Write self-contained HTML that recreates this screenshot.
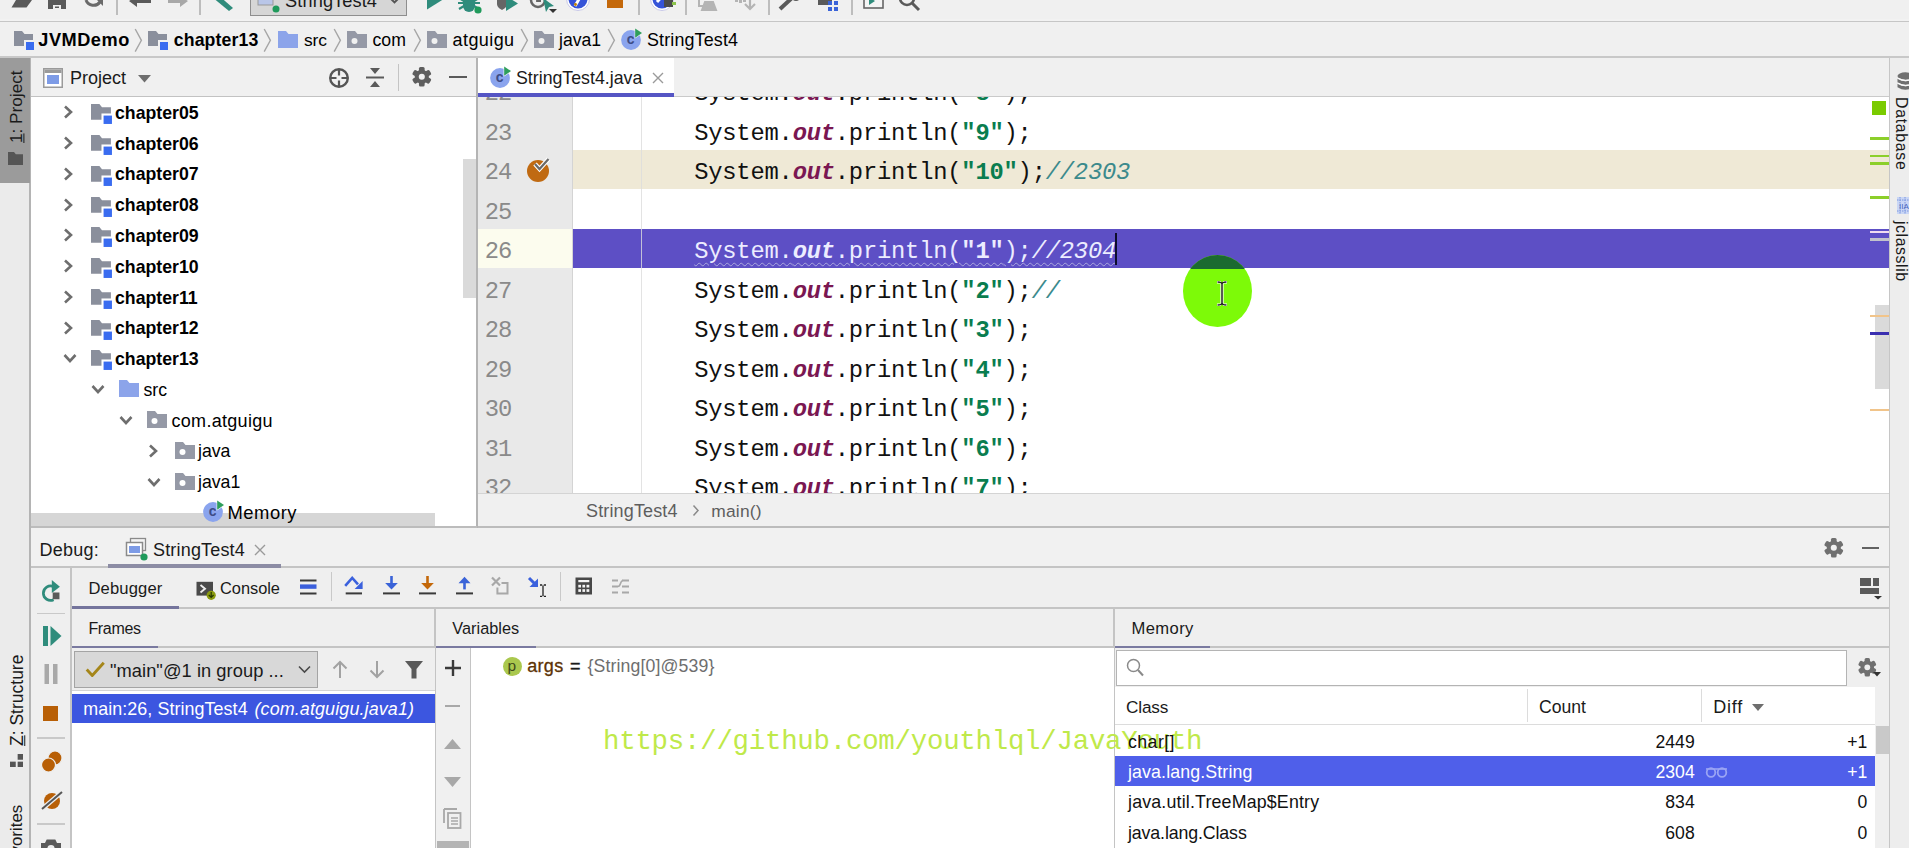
<!DOCTYPE html>
<html><head><meta charset="utf-8"><title>StringTest4 - Debug</title>
<style>
html,body{margin:0;padding:0;}
body{width:1909px;height:848px;overflow:hidden;position:relative;background:#f0f0f0;font-family:"Liberation Sans",sans-serif;}
#r{position:absolute;left:0;top:0;width:1909px;height:848px;overflow:hidden;}
#r div,#r span,#r svg{position:absolute;}
#r span{white-space:pre;line-height:1;}
#r span span,#r span b,#r span i,#r span u{position:static;}
.m{font-family:"Liberation Mono",monospace;}
</style></head><body><div id="r">
<div style="left:0px;top:0px;width:1909px;height:21px;background:#f0f0f0;"></div>
<div style="left:0px;top:19.3px;width:1909px;height:1.3px;background:#f2f2f2;"></div>
<div style="left:0px;top:20.7px;width:1909px;height:1.9px;background:#c6c6c6;"></div>
<svg style="left:10px;top:0px;" width="24" height="9" viewBox="0 0 24 9"><path d="M6 0h16l-5.500 7.400H1.500z" fill="#5a5a5a"/></svg>
<svg style="left:48px;top:0px;" width="20" height="10" viewBox="0 0 20 10"><path d="M0 0h18v9H0z" fill="#5a5a5a"/><rect x="5" y="5" width="8" height="4" fill="#f0f0f0"/><rect x="7" y="6.5" width="4" height="1.5" fill="#5a5a5a"/></svg>
<svg style="left:83px;top:0px;" width="22" height="10" viewBox="0 0 22 10"><path d="M3 0a8 8 0 0 0 14 2" fill="none" stroke="#6a6a6a" stroke-width="3"/><path d="M14 0h6v6z" fill="#6a6a6a"/></svg>
<div style="left:116px;top:0px;width:1.5px;height:15px;background:#bdbdbd;"></div>
<svg style="left:128px;top:0px;" width="24" height="8" viewBox="0 0 24 8"><path d="M0 1l8-5v4h14v3H8v4z" fill="#5a5a5a" transform="translate(1 0)"/></svg>
<svg style="left:166px;top:0px;" width="24" height="8" viewBox="0 0 24 8"><path d="M22 1l-8-5v4H2v3h12v4z" fill="#a8a8a8"/></svg>
<div style="left:199px;top:0px;width:1.5px;height:15px;background:#bdbdbd;"></div>
<svg style="left:210px;top:0px;" width="26" height="12" viewBox="0 0 26 12"><path d="M2 -3l5 -3 16 14-4 3z" fill="#2f8c7c"/></svg>
<div style="left:250px;top:-2px;width:156.5px;height:18px;background:#d6d6d6;border:1.4px solid #8e8e8e;box-sizing:border-box;"></div>
<svg style="left:257px;top:0px;" width="24" height="14" viewBox="0 0 24 14"><rect x="1" y="-6" width="15" height="11" fill="#b9c6e8" stroke="#999" stroke-width="1"/><circle cx="19" cy="9" r="3.5" fill="#1f9a5b"/></svg>
<span  style="left:285.00px;top:-8.00px;font-size:18.2px;color:#1a1a1a;letter-spacing:0.096px;">StringTest4</span>
<svg style="left:387.5px;top:0px;" width="14" height="8" viewBox="0 0 14 8"><path d="M0.500 -3.600l6 6 6-6" fill="none" stroke="#555" stroke-width="2"/></svg>
<svg style="left:424px;top:0px;" width="22" height="12" viewBox="0 0 22 12"><path d="M3 -10v19.500l15.500-9.700z" fill="#2f8c7c"/></svg>
<svg style="left:458px;top:0px;" width="26" height="14" viewBox="0 0 26 14"><path d="M5 -4h12v10a6 6 0 0 1-12 0z" fill="#2f8c7c"/><path d="M0 3h22M1 -2l5 3M21 -2l-5 3M1 9l5-3M21 9l-5-3" stroke="#2f8c7c" stroke-width="2.2"/><circle cx="20" cy="10" r="3.6" fill="#1f9a5b"/></svg>
<svg style="left:495px;top:0px;" width="26" height="14" viewBox="0 0 26 14"><path d="M2 -6h10v10c0 3-3 5-5 6-2-1-5-3-5-6z" fill="#666"/><path d="M11 -4v15l12-7.5z" fill="#2f8c7c"/></svg>
<svg style="left:528px;top:0px;" width="30" height="14" viewBox="0 0 30 14"><circle cx="10" cy="0" r="7" fill="none" stroke="#666" stroke-width="2.5"/><path d="M9 -4v5h4" stroke="#666" stroke-width="1.8" fill="none"/><path d="M15 -2l11 8-5 1-3 5z" fill="#2f8c7c"/><path d="M21 9h8l-4 4z" fill="#333"/></svg>
<svg style="left:564px;top:0px;" width="28" height="13" viewBox="0 0 28 13"><circle cx="14" cy="-1" r="11.5" fill="#fff" stroke="#c8c8e8" stroke-width="1"/><circle cx="14" cy="-1" r="9.5" fill="#3553d8"/><path d="M11 6l7-12" stroke="#fff" stroke-width="3"/><circle cx="11.5" cy="4.5" r="1.4" fill="#c08000"/></svg>
<div style="left:607px;top:0px;width:16px;height:8px;background:#c4680a;"></div>
<div style="left:638px;top:0px;width:1.5px;height:15px;background:#bdbdbd;"></div>
<svg style="left:648px;top:0px;" width="30" height="13" viewBox="0 0 30 13"><circle cx="14" cy="-1" r="11.5" fill="#fff" stroke="#c8c8e8" stroke-width="1"/><circle cx="14" cy="-1" r="9.5" fill="#3553d8"/><path d="M9 2l8-9" stroke="#fff" stroke-width="3"/><rect x="16" y="-2" width="9" height="9" fill="#4a4a4a"/><rect x="24" y="2" width="4" height="3" fill="#8bc34a"/></svg>
<div style="left:685px;top:0px;width:1.5px;height:15px;background:#bdbdbd;"></div>
<svg style="left:697px;top:0px;" width="24" height="12" viewBox="0 0 24 12"><path d="M2 -4v10h4M9 -6v6M5 10l3-8h8l3 8z" fill="none" stroke="#b4b4b4" stroke-width="2"/><path d="M5 10l3-7h8l3 7z" fill="#b4b4b4"/></svg>
<svg style="left:733px;top:0px;" width="24" height="12" viewBox="0 0 24 12"><path d="M2 -6h3v8H2zM6 -6h3v9H6zM10 -6h3v8h-3z" fill="#b4b4b4"/><path d="M17 -6v14M12 4l5 5 5-5" fill="none" stroke="#b4b4b4" stroke-width="2.2"/></svg>
<div style="left:768px;top:0px;width:1.5px;height:15px;background:#bdbdbd;"></div>
<svg style="left:778px;top:0px;" width="26" height="12" viewBox="0 0 26 12"><path d="M2 9l13-12" stroke="#5a5a5a" stroke-width="4"/><path d="M14 -6a6 6 0 0 0 10 3l-3 -3z" fill="#5a5a5a"/><circle cx="18" cy="-4" r="5" fill="#5a5a5a"/></svg>
<svg style="left:816px;top:0px;" width="24" height="13" viewBox="0 0 24 13"><rect x="2" y="-8" width="14" height="13" fill="#5a5a5a"/><rect x="12" y="1" width="4" height="4" fill="#3a63d8"/><rect x="18" y="1" width="4" height="4" fill="#3a63d8"/><rect x="12" y="7" width="4" height="4" fill="#3a63d8"/><rect x="18" y="7" width="4" height="4" fill="#3a63d8"/><rect x="18" y="-5" width="4" height="4" fill="#3a63d8"/></svg>
<div style="left:851px;top:0px;width:1.5px;height:15px;background:#bdbdbd;"></div>
<svg style="left:862px;top:0px;" width="24" height="10" viewBox="0 0 24 10"><rect x="2" y="-8" width="19" height="16" fill="#f4f4f4" stroke="#666" stroke-width="1.6"/><path d="M7 -3v8l6-4z" fill="#2f8c7c"/></svg>
<svg style="left:898px;top:0px;" width="26" height="12" viewBox="0 0 26 12"><circle cx="9" cy="-2" r="7" fill="none" stroke="#5a5a5a" stroke-width="2.6"/><path d="M14 3l7 7" stroke="#5a5a5a" stroke-width="3"/></svg>
<div style="left:0px;top:22px;width:1909px;height:34px;background:#f0f0f0;"></div>
<div style="left:0px;top:55.9px;width:1909px;height:1.8px;background:#c8c8c8;"></div>
<svg style="left:14px;top:30px;" width="21" height="21" viewBox="0 0 21 21"><path d="M0 1h8l2.5 3H19v12H0z" fill="#8a8f9c"/><rect x="10" y="10" width="10" height="10" fill="#f0f0f0"/><rect x="12" y="12" width="8" height="8" fill="#3a6cf0"/></svg>
<span  style="left:38.30px;top:31.00px;font-size:18.2px;color:#000;font-weight:bold;letter-spacing:0.502px;">JVMDemo</span>
<svg style="left:134px;top:27.5px;" width="10" height="25" viewBox="0 0 10 25"><path d="M1.200 1l6.200 11.300-6.200 11.300" fill="none" stroke="#a6a6a6" stroke-width="1.400"/></svg>
<svg style="left:148px;top:30px;" width="21" height="21" viewBox="0 0 21 21"><path d="M0 1h8l2.5 3H19v12H0z" fill="#8a8f9c"/><rect x="10" y="10" width="10" height="10" fill="#f0f0f0"/><rect x="12" y="12" width="8" height="8" fill="#3a6cf0"/></svg>
<span  style="left:173.80px;top:32.00px;font-size:17.7px;color:#000;font-weight:bold;letter-spacing:0.109px;">chapter13</span>
<svg style="left:263px;top:27.5px;" width="10" height="25" viewBox="0 0 10 25"><path d="M1.200 1l6.200 11.300-6.200 11.300" fill="none" stroke="#a6a6a6" stroke-width="1.400"/></svg>
<svg style="left:277.5px;top:30.5px;" width="20" height="17" viewBox="0 0 20 17"><path d="M0 0h8l2.5 3H20v14H0z" fill="#8ca4ea"/></svg>
<span  style="left:304.00px;top:32.00px;font-size:17.4px;color:#000;letter-spacing:-0.097px;">src</span>
<svg style="left:333px;top:27.5px;" width="10" height="25" viewBox="0 0 10 25"><path d="M1.200 1l6.200 11.300-6.200 11.300" fill="none" stroke="#a6a6a6" stroke-width="1.400"/></svg>
<svg style="left:346.5px;top:30.5px;" width="20" height="17" viewBox="0 0 20 17"><path d="M0 0h8l2.5 3H20v14H0z" fill="#9599a6"/><circle cx="7.5" cy="10" r="3" fill="#f0f0f0"/></svg>
<span  style="left:372.50px;top:32.00px;font-size:17.7px;color:#000;">com</span>
<svg style="left:413px;top:27.5px;" width="10" height="25" viewBox="0 0 10 25"><path d="M1.200 1l6.200 11.300-6.200 11.300" fill="none" stroke="#a6a6a6" stroke-width="1.400"/></svg>
<svg style="left:427px;top:30.5px;" width="20" height="17" viewBox="0 0 20 17"><path d="M0 0h8l2.5 3H20v14H0z" fill="#9599a6"/><circle cx="7.5" cy="10" r="3" fill="#f0f0f0"/></svg>
<span  style="left:452.60px;top:31.00px;font-size:18px;color:#000;letter-spacing:0.408px;">atguigu</span>
<svg style="left:520px;top:27.5px;" width="10" height="25" viewBox="0 0 10 25"><path d="M1.200 1l6.200 11.300-6.200 11.300" fill="none" stroke="#a6a6a6" stroke-width="1.400"/></svg>
<svg style="left:534px;top:30.5px;" width="20" height="17" viewBox="0 0 20 17"><path d="M0 0h8l2.5 3H20v14H0z" fill="#9599a6"/><circle cx="7.5" cy="10" r="3" fill="#f0f0f0"/></svg>
<span  style="left:559.00px;top:32.00px;font-size:17.6px;color:#000;letter-spacing:-0.019px;">java1</span>
<svg style="left:607px;top:27.5px;" width="10" height="25" viewBox="0 0 10 25"><path d="M1.200 1l6.200 11.300-6.200 11.300" fill="none" stroke="#a6a6a6" stroke-width="1.400"/></svg>
<svg style="left:620.3px;top:26.6px;" width="24" height="24" viewBox="0 0 24 24"><circle cx="11" cy="13" r="9.900" fill="#8aa4ee"/><text x="10.700" y="17" font-family="Liberation Sans, sans-serif" font-size="14" font-weight="bold" fill="#3d4c86" text-anchor="middle">c</text><path d="M15.200 1.400v9.300l6.800-4.600z" fill="#2f9e5c" stroke="#f0f0f0" stroke-width="1.200" paint-order="stroke"/></svg>
<span  style="left:647.00px;top:32.00px;font-size:17.9px;color:#000;letter-spacing:0.146px;">StringTest4</span>
<div style="left:0px;top:57.5px;width:30px;height:800px;background:#ebebeb;"></div>
<div style="left:29.4px;top:57.5px;width:1.6px;height:800px;background:#b4b4b4;"></div>
<div style="left:0px;top:57.5px;width:29.6px;height:125.5px;background:#9b9b9b;"></div>
<span style="left:17.3px;top:143.3px;font-size:17.2px;color:#1a1a1a;transform-origin:0 0;transform:rotate(-90deg) translate(0,-50%);line-height:1;"><u>1</u>: Project</span>
<svg style="left:8.4px;top:152px;" width="15" height="13" viewBox="0 0 15 13"><path d="M0 0h6l1.8 2.2H15V13H0z" fill="#555"/></svg>
<span style="left:17.6px;top:746.4px;font-size:17.5px;color:#1a1a1a;transform-origin:0 0;transform:rotate(-90deg) translate(0,-50%);line-height:1;"><u>Z</u>: Structure</span>
<svg style="left:9.6px;top:754px;" width="13.4" height="13.4" viewBox="0 0 14 14"><rect x="8" y="0" width="6" height="6" fill="#555"/><rect x="0" y="8" width="6" height="6" fill="#555"/><rect x="8" y="8" width="6" height="6" fill="#555"/></svg>
<span style="left:17.3px;top:893px;font-size:16.9px;color:#1a1a1a;transform-origin:0 0;transform:rotate(-90deg) translate(0,-50%);line-height:1;">2: Favorites</span>
<div style="left:31px;top:57.5px;width:446px;height:39px;background:#f0f0f0;"></div>
<div style="left:31px;top:95.5px;width:446px;height:1.4px;background:#c2c2c2;"></div>
<div style="left:31px;top:97px;width:446px;height:431px;background:#fff;"></div>
<div style="left:476.2px;top:57.5px;width:1.7px;height:471px;background:#b4b4b4;"></div>
<svg style="left:43px;top:67.5px;" width="20" height="20" viewBox="0 0 20 20"><rect x="0.75" y="0.75" width="18.5" height="18.5" fill="#fff" stroke="#9a9a9a" stroke-width="1.5"/><rect x="1.5" y="1.5" width="17" height="3.5" fill="#9a9a9a"/><rect x="4" y="7" width="12" height="9" fill="#7d9be6"/></svg>
<span  style="left:70.00px;top:69.00px;font-size:18px;color:#1a1a1a;">Project</span>
<svg style="left:138px;top:74.5px;" width="13" height="8" viewBox="0 0 13 8"><path d="M0 0h13l-6.5 7.5z" fill="#6e6e6e"/></svg>
<svg style="left:327.5px;top:66.5px;" width="22" height="22" viewBox="0 0 22 22"><circle cx="11" cy="11" r="8.800" fill="none" stroke="#555" stroke-width="2.400"/><path d="M11 2v6.500M11 13.500v6.500M2 11h6.500M13.500 11h6.500" stroke="#555" stroke-width="2.200"/></svg>
<svg style="left:365px;top:67px;" width="20" height="21" viewBox="0 0 20 21"><path d="M1 10.5h18" stroke="#5a5a5a" stroke-width="2"/><path d="M5 1h10l-5 6zM5 20h10l-5-6z" fill="#5a5a5a"/></svg>
<div style="left:397.5px;top:64px;width:1.5px;height:27px;background:#c4c4c4;"></div>
<svg style="left:410.7px;top:66.0px;" width="21.6" height="21.6" viewBox="0 0 21.6 21.6"><g transform="translate(10.8 10.8)"><rect x="-2.84" y="-9.8" width="5.68" height="19.6" rx="1.500" transform="rotate(0)" fill="#5e5e5e"/><rect x="-2.84" y="-9.8" width="5.68" height="19.6" rx="1.500" transform="rotate(60)" fill="#5e5e5e"/><rect x="-2.84" y="-9.8" width="5.68" height="19.6" rx="1.500" transform="rotate(120)" fill="#5e5e5e"/><circle r="7.06" fill="#5e5e5e"/><circle r="3.04" fill="#f0f0f0"/></g></svg>
<div style="left:449px;top:76px;width:18px;height:2.4px;background:#5a5a5a;"></div>
<div style="left:463px;top:159px;width:13.2px;height:139px;background:#dadada;"></div>
<div style="left:31px;top:512.8px;width:404px;height:14px;background:#d6d6d6;"></div>
<svg style="left:63.3px;top:105.4px;" width="10" height="14" viewBox="0 0 10 14"><path d="M2 1.500l6 5.500-6 5.500" fill="none" stroke="#6e6e6e" stroke-width="2.600"/></svg>
<svg style="left:91.3px;top:103.4px;" width="22" height="22" viewBox="0 0 21 21"><path d="M0 1h8l2.5 3H19v12H0z" fill="#8a8f9c"/><rect x="10" y="10" width="10" height="10" fill="#fff"/><rect x="12" y="12" width="8" height="8" fill="#3a6cf0"/></svg>
<span  style="left:115.00px;top:105.00px;font-size:17.7px;color:#000;font-weight:bold;">chapter05</span>
<svg style="left:63.3px;top:136.15px;" width="10" height="14" viewBox="0 0 10 14"><path d="M2 1.500l6 5.500-6 5.500" fill="none" stroke="#6e6e6e" stroke-width="2.600"/></svg>
<svg style="left:91.3px;top:134.15px;" width="22" height="22" viewBox="0 0 21 21"><path d="M0 1h8l2.5 3H19v12H0z" fill="#8a8f9c"/><rect x="10" y="10" width="10" height="10" fill="#fff"/><rect x="12" y="12" width="8" height="8" fill="#3a6cf0"/></svg>
<span  style="left:115.00px;top:136.00px;font-size:17.7px;color:#000;font-weight:bold;">chapter06</span>
<svg style="left:63.3px;top:166.9px;" width="10" height="14" viewBox="0 0 10 14"><path d="M2 1.500l6 5.500-6 5.500" fill="none" stroke="#6e6e6e" stroke-width="2.600"/></svg>
<svg style="left:91.3px;top:164.9px;" width="22" height="22" viewBox="0 0 21 21"><path d="M0 1h8l2.5 3H19v12H0z" fill="#8a8f9c"/><rect x="10" y="10" width="10" height="10" fill="#fff"/><rect x="12" y="12" width="8" height="8" fill="#3a6cf0"/></svg>
<span  style="left:115.00px;top:166.00px;font-size:17.7px;color:#000;font-weight:bold;">chapter07</span>
<svg style="left:63.3px;top:197.65px;" width="10" height="14" viewBox="0 0 10 14"><path d="M2 1.500l6 5.500-6 5.500" fill="none" stroke="#6e6e6e" stroke-width="2.600"/></svg>
<svg style="left:91.3px;top:195.65px;" width="22" height="22" viewBox="0 0 21 21"><path d="M0 1h8l2.5 3H19v12H0z" fill="#8a8f9c"/><rect x="10" y="10" width="10" height="10" fill="#fff"/><rect x="12" y="12" width="8" height="8" fill="#3a6cf0"/></svg>
<span  style="left:115.00px;top:197.00px;font-size:17.7px;color:#000;font-weight:bold;">chapter08</span>
<svg style="left:63.3px;top:228.4px;" width="10" height="14" viewBox="0 0 10 14"><path d="M2 1.500l6 5.500-6 5.500" fill="none" stroke="#6e6e6e" stroke-width="2.600"/></svg>
<svg style="left:91.3px;top:226.4px;" width="22" height="22" viewBox="0 0 21 21"><path d="M0 1h8l2.5 3H19v12H0z" fill="#8a8f9c"/><rect x="10" y="10" width="10" height="10" fill="#fff"/><rect x="12" y="12" width="8" height="8" fill="#3a6cf0"/></svg>
<span  style="left:115.00px;top:228.00px;font-size:17.7px;color:#000;font-weight:bold;">chapter09</span>
<svg style="left:63.3px;top:259.15px;" width="10" height="14" viewBox="0 0 10 14"><path d="M2 1.500l6 5.500-6 5.500" fill="none" stroke="#6e6e6e" stroke-width="2.600"/></svg>
<svg style="left:91.3px;top:257.15px;" width="22" height="22" viewBox="0 0 21 21"><path d="M0 1h8l2.5 3H19v12H0z" fill="#8a8f9c"/><rect x="10" y="10" width="10" height="10" fill="#fff"/><rect x="12" y="12" width="8" height="8" fill="#3a6cf0"/></svg>
<span  style="left:115.00px;top:259.00px;font-size:17.7px;color:#000;font-weight:bold;">chapter10</span>
<svg style="left:63.3px;top:289.9px;" width="10" height="14" viewBox="0 0 10 14"><path d="M2 1.500l6 5.500-6 5.500" fill="none" stroke="#6e6e6e" stroke-width="2.600"/></svg>
<svg style="left:91.3px;top:287.9px;" width="22" height="22" viewBox="0 0 21 21"><path d="M0 1h8l2.5 3H19v12H0z" fill="#8a8f9c"/><rect x="10" y="10" width="10" height="10" fill="#fff"/><rect x="12" y="12" width="8" height="8" fill="#3a6cf0"/></svg>
<span  style="left:115.00px;top:290.00px;font-size:17.7px;color:#000;font-weight:bold;">chapter11</span>
<svg style="left:63.3px;top:320.65px;" width="10" height="14" viewBox="0 0 10 14"><path d="M2 1.500l6 5.500-6 5.500" fill="none" stroke="#6e6e6e" stroke-width="2.600"/></svg>
<svg style="left:91.3px;top:318.65px;" width="22" height="22" viewBox="0 0 21 21"><path d="M0 1h8l2.5 3H19v12H0z" fill="#8a8f9c"/><rect x="10" y="10" width="10" height="10" fill="#fff"/><rect x="12" y="12" width="8" height="8" fill="#3a6cf0"/></svg>
<span  style="left:115.00px;top:320.00px;font-size:17.7px;color:#000;font-weight:bold;">chapter12</span>
<svg style="left:62.5px;top:353.4px;" width="14" height="10" viewBox="0 0 14 10"><path d="M1.500 2l5.500 6 5.500-6" fill="none" stroke="#6e6e6e" stroke-width="2.600"/></svg>
<svg style="left:91.3px;top:349.4px;" width="22" height="22" viewBox="0 0 21 21"><path d="M0 1h8l2.5 3H19v12H0z" fill="#8a8f9c"/><rect x="10" y="10" width="10" height="10" fill="#fff"/><rect x="12" y="12" width="8" height="8" fill="#3a6cf0"/></svg>
<span  style="left:115.00px;top:351.00px;font-size:17.7px;color:#000;font-weight:bold;">chapter13</span>
<svg style="left:90.5px;top:384.45px;" width="14" height="10" viewBox="0 0 14 10"><path d="M1.500 2l5.500 6 5.500-6" fill="none" stroke="#6e6e6e" stroke-width="2.600"/></svg>
<svg style="left:119px;top:380.25px;" width="20" height="17" viewBox="0 0 20 17"><path d="M0 0h8l2.5 3H20v14H0z" fill="#8ca4ea"/></svg>
<span  style="left:143.50px;top:382.00px;font-size:17.7px;color:#000;">src</span>
<svg style="left:118.5px;top:415.2px;" width="14" height="10" viewBox="0 0 14 10"><path d="M1.500 2l5.500 6 5.500-6" fill="none" stroke="#6e6e6e" stroke-width="2.600"/></svg>
<svg style="left:147px;top:411.0px;" width="20" height="17" viewBox="0 0 20 17"><path d="M0 0h8l2.5 3H20v14H0z" fill="#9599a6"/><circle cx="7.5" cy="10" r="3" fill="#fff"/></svg>
<span  style="left:171.50px;top:412.00px;font-size:18px;color:#000;letter-spacing:0.294px;">com.atguigu</span>
<svg style="left:148px;top:443.95px;" width="10" height="14" viewBox="0 0 10 14"><path d="M2 1.500l6 5.500-6 5.500" fill="none" stroke="#6e6e6e" stroke-width="2.600"/></svg>
<svg style="left:175px;top:441.75px;" width="20" height="17" viewBox="0 0 20 17"><path d="M0 0h8l2.5 3H20v14H0z" fill="#9599a6"/><circle cx="7.5" cy="10" r="3" fill="#fff"/></svg>
<span  style="left:198.00px;top:443.00px;font-size:17.7px;color:#000;">java</span>
<svg style="left:146.5px;top:476.7px;" width="14" height="10" viewBox="0 0 14 10"><path d="M1.500 2l5.500 6 5.500-6" fill="none" stroke="#6e6e6e" stroke-width="2.600"/></svg>
<svg style="left:175px;top:472.5px;" width="20" height="17" viewBox="0 0 20 17"><path d="M0 0h8l2.5 3H20v14H0z" fill="#9599a6"/><circle cx="7.5" cy="10" r="3" fill="#fff"/></svg>
<span  style="left:198.00px;top:474.00px;font-size:17.7px;color:#000;">java1</span>
<svg style="left:202.2px;top:499.45000000000005px;" width="24" height="24" viewBox="0 0 24 24"><circle cx="11" cy="13" r="9.900" fill="#8aa4ee"/><text x="10.700" y="17" font-family="Liberation Sans, sans-serif" font-size="14" font-weight="bold" fill="#3d4c86" text-anchor="middle">c</text><path d="M15.200 1.400v9.300l6.800-4.600z" fill="#2f9e5c" stroke="#fff" stroke-width="1.200" paint-order="stroke"/></svg>
<span  style="left:227.50px;top:504.00px;font-size:18.4px;color:#000;letter-spacing:0.51px;">Memory</span>
<div style="left:31px;top:526.4px;width:446px;height:2px;background:#bcbcbc;"></div>
<div style="left:478px;top:57.5px;width:1411px;height:39px;background:#f0f0f0;"></div>
<div style="left:478px;top:95.5px;width:1411px;height:1.5px;background:#cacaca;"></div>
<div style="left:478px;top:57.5px;width:196px;height:36px;background:#fff;"></div>
<div style="left:478px;top:93px;width:196px;height:4px;background:#5555c4;"></div>
<svg style="left:489.2px;top:65px;" width="24" height="24" viewBox="0 0 24 24"><circle cx="11" cy="13" r="9.900" fill="#8aa4ee"/><text x="10.700" y="17" font-family="Liberation Sans, sans-serif" font-size="14" font-weight="bold" fill="#3d4c86" text-anchor="middle">c</text><path d="M15.200 1.400v9.300l6.800-4.600z" fill="#2f9e5c" stroke="#fff" stroke-width="1.200" paint-order="stroke"/></svg>
<span  style="left:516.00px;top:70.00px;font-size:17.75px;color:#1a1a1a;">StringTest4.java</span>
<svg style="left:652px;top:71.5px;" width="12" height="12" viewBox="0 0 12 12"><path d="M1 1l10 10M11 1L1 11" stroke="#9a9a9a" stroke-width="1.4"/></svg>
<div style="left:478px;top:97px;width:1411px;height:396px;background:#fff;overflow:hidden;" id="ed">
<div style="left:0px;top:0px;width:94px;height:396px;background:#e9e9e9;"></div>
<div style="left:94px;top:0px;width:1px;height:396px;background:#d4d4d4;"></div>
<div style="left:95px;top:53.19999999999999px;width:1316px;height:38.5px;background:#efe9d6;"></div>
<div style="left:0px;top:132.2px;width:94px;height:38.8px;background:#fcfcee;"></div>
<div style="left:95px;top:132.2px;width:1316px;height:38.8px;background:#5d4fc5;"></div>
<div style="left:163px;top:0px;width:1px;height:396px;background:#dcdcdc;opacity:.8;"></div>
<span class="m" style="left:6.80px;top:-15.00px;font-size:23.8px;color:#8a8a8a;letter-spacing:-1px;">22</span>
<span class="m" style="left:216.20px;top:-15.00px;font-size:23.8px;color:#111;letter-spacing:-0.22px;">System.<b><i style="color:#7a1752">out</i></b>.println(<b style="color:#0a7d4f">"8"</b>);<i style="color:#3b8a8c"></i></span>
<span class="m" style="left:6.80px;top:25.00px;font-size:23.8px;color:#8a8a8a;letter-spacing:-1px;">23</span>
<span class="m" style="left:216.20px;top:25.00px;font-size:23.8px;color:#111;letter-spacing:-0.22px;">System.<b><i style="color:#7a1752">out</i></b>.println(<b style="color:#0a7d4f">"9"</b>);<i style="color:#3b8a8c"></i></span>
<span class="m" style="left:6.80px;top:64.00px;font-size:23.8px;color:#8a8a8a;letter-spacing:-1px;">24</span>
<span class="m" style="left:216.20px;top:64.00px;font-size:23.8px;color:#111;letter-spacing:-0.22px;">System.<b><i style="color:#7a1752">out</i></b>.println(<b style="color:#0a7d4f">"10"</b>);<i style="color:#3b8a8c">//2303</i></span>
<span class="m" style="left:6.80px;top:104.00px;font-size:23.8px;color:#8a8a8a;letter-spacing:-1px;">25</span>
<span class="m" style="left:6.80px;top:143.00px;font-size:23.8px;color:#8a8a8a;letter-spacing:-1px;">26</span>
<span class="m" style="left:216.20px;top:143.00px;font-size:23.8px;color:#ececff;letter-spacing:-0.22px;text-decoration:underline wavy rgba(200,200,230,.7) 1px;text-underline-offset:4px;">System.<b><i>out</i></b>.println(<b>"1"</b>);<i>//2304</i></span>
<span class="m" style="left:6.80px;top:183.00px;font-size:23.8px;color:#8a8a8a;letter-spacing:-1px;">27</span>
<span class="m" style="left:216.20px;top:183.00px;font-size:23.8px;color:#111;letter-spacing:-0.22px;">System.<b><i style="color:#7a1752">out</i></b>.println(<b style="color:#0a7d4f">"2"</b>);<i style="color:#3b8a8c">//</i></span>
<span class="m" style="left:6.80px;top:222.00px;font-size:23.8px;color:#8a8a8a;letter-spacing:-1px;">28</span>
<span class="m" style="left:216.20px;top:222.00px;font-size:23.8px;color:#111;letter-spacing:-0.22px;">System.<b><i style="color:#7a1752">out</i></b>.println(<b style="color:#0a7d4f">"3"</b>);<i style="color:#3b8a8c"></i></span>
<span class="m" style="left:6.80px;top:262.00px;font-size:23.8px;color:#8a8a8a;letter-spacing:-1px;">29</span>
<span class="m" style="left:216.20px;top:262.00px;font-size:23.8px;color:#111;letter-spacing:-0.22px;">System.<b><i style="color:#7a1752">out</i></b>.println(<b style="color:#0a7d4f">"4"</b>);<i style="color:#3b8a8c"></i></span>
<span class="m" style="left:6.80px;top:301.00px;font-size:23.8px;color:#8a8a8a;letter-spacing:-1px;">30</span>
<span class="m" style="left:216.20px;top:301.00px;font-size:23.8px;color:#111;letter-spacing:-0.22px;">System.<b><i style="color:#7a1752">out</i></b>.println(<b style="color:#0a7d4f">"5"</b>);<i style="color:#3b8a8c"></i></span>
<span class="m" style="left:6.80px;top:341.00px;font-size:23.8px;color:#8a8a8a;letter-spacing:-1px;">31</span>
<span class="m" style="left:216.20px;top:341.00px;font-size:23.8px;color:#111;letter-spacing:-0.22px;">System.<b><i style="color:#7a1752">out</i></b>.println(<b style="color:#0a7d4f">"6"</b>);<i style="color:#3b8a8c"></i></span>
<span class="m" style="left:6.80px;top:380.00px;font-size:23.8px;color:#8a8a8a;letter-spacing:-1px;">32</span>
<span class="m" style="left:216.20px;top:380.00px;font-size:23.8px;color:#111;letter-spacing:-0.22px;">System.<b><i style="color:#7a1752">out</i></b>.println(<b style="color:#0a7d4f">"7"</b>);<i style="color:#3b8a8c"></i></span>
<div style="left:636.9000000000001px;top:136px;width:2.2px;height:31.5px;background:#0c0c2c;"></div>
<svg style="left:48px;top:59px" width="28" height="28" viewBox="0 0 28 28"><circle cx="12" cy="15" r="11" fill="#c06a12"/><path d="M9 8l4.5 5 9-10" fill="none" stroke="#fff" stroke-width="4.5"/><path d="M9 8l4.5 5 9-10" fill="none" stroke="#6a6a6a" stroke-width="2.2"/></svg>
<div style="left:1394px;top:3.5px;width:14px;height:14px;background:#7acb00;"></div>
<div style="left:1391.5px;top:40px;width:19.5px;height:2.6px;background:#8ccf2a;"></div>
<div style="left:1391.5px;top:57.5px;width:19.5px;height:2.6px;background:#8ccf2a;"></div>
<div style="left:1391.5px;top:65px;width:19.5px;height:2.6px;background:#8ccf2a;"></div>
<div style="left:1391.5px;top:99px;width:19.5px;height:2.6px;background:#8ccf2a;"></div>
<div style="left:1391.5px;top:134px;width:19.5px;height:2.4px;background:#f1dcf1;"></div>
<div style="left:1391.5px;top:141px;width:19.5px;height:2.6px;background:#c2c2cc;"></div>
<div style="left:1397px;top:208px;width:14px;height:84px;background:#dadada;"></div>
<div style="left:1391.5px;top:217.5px;width:19.5px;height:2px;background:#f1c48a;"></div>
<div style="left:1391.5px;top:234.5px;width:19.5px;height:3px;background:#3a2fb0;"></div>
<div style="left:1391.5px;top:312px;width:19.5px;height:2px;background:#f1c48a;"></div>
<div style="left:705px;top:158px;width:69px;height:72px;border-radius:50%;background:#7dfa08;"></div>
<div style="left:95px;top:132.0px;width:1316px;height:39.5px;overflow:hidden;background:none;"><div style="left:610px;top:26.0px;width:69px;height:72px;border-radius:50%;background:#1b6a30;"></div></div>
<svg style="left:738px;top:184px" width="12" height="25" viewBox="0 0 12 25"><path d="M1 1h4M7 1h4M1 24h4M7 24h4M6 2v21" stroke="#fff" stroke-width="3.2"/><path d="M1.5 1q4.5 0 4.5 2 0-2 4.5-2M1.5 24q4.5 0 4.5-2 0 2 4.5 2M6 3v19" stroke="#222" stroke-width="1.5" fill="none"/></svg>
</div>
<div style="left:478px;top:493px;width:1411px;height:34.5px;background:#f0f0f0;"></div>
<div style="left:478px;top:492.5px;width:1411px;height:1px;background:#d4d4d4;"></div>
<div style="left:478px;top:526.4px;width:1411px;height:2px;background:#bcbcbc;"></div>
<span  style="left:586.00px;top:502.00px;font-size:18px;color:#5e5e5e;letter-spacing:0.146px;">StringTest4</span>
<svg style="left:692px;top:504px;" width="8" height="13" viewBox="0 0 8 13"><path d="M1.5 1.5l4.5 5-4.5 5" fill="none" stroke="#8a8a8a" stroke-width="1.5"/></svg>
<span  style="left:711.30px;top:503.00px;font-size:17.4px;color:#5e5e5e;letter-spacing:0.199px;">main()</span>
<div style="left:1889px;top:57.5px;width:20px;height:800px;background:#ededed;"></div>
<div style="left:1889px;top:57.5px;width:1px;height:800px;background:#c6c6c6;"></div>
<svg style="left:1897px;top:72px;" width="12" height="19" viewBox="0 0 12 19"><ellipse cx="8.500" cy="4" rx="8" ry="3.700" fill="#707070"/><path d="M0.500 6.800q8 5 16 0v3.400q-8 5-16 0z" fill="#707070"/><path d="M0.500 11.800q8 5 16 0v3.400q-8 5-16 0z" fill="#707070"/><path d="M1 6.300q7.500 4.500 15.500 0M1 11.300q7.500 4.500 15.500 0" fill="none" stroke="#fafafa" stroke-width="1.200"/></svg>
<span style="left:1901.4px;top:97.3px;font-size:15.800px;letter-spacing:0.720px;color:#1a1a1a;transform-origin:0 0;transform:rotate(90deg) translate(0,-50%);line-height:1;">Database</span>
<svg style="left:1897px;top:197px;" width="12" height="17" viewBox="0 0 12 17"><rect x="0" y="0" width="12" height="17" fill="#c9d6f5"/><path d="M0 3h12M0 14h12M3 0v17M8 0v17" stroke="#7d96de" stroke-width="1" stroke-dasharray="1.5 1"/><text x="2" y="12" font-family="Liberation Sans, sans-serif" font-size="8" fill="#4a66c0">IIA</text></svg>
<span style="left:1901.4px;top:221.3px;font-size:15.800px;letter-spacing:0.600px;color:#1a1a1a;transform-origin:0 0;transform:rotate(90deg) translate(0,-50%);line-height:1;">jclasslib</span>
<div style="left:31px;top:528.4px;width:1858px;height:320px;background:#efefef;"></div>
<div style="left:31px;top:528.4px;width:1858px;height:38px;background:#f1f1f1;"></div>
<div style="left:31px;top:566.4px;width:1858px;height:2px;background:#c4c4c4;"></div>
<div style="left:71px;top:606.8px;width:1818px;height:2px;background:#c4c4c4;"></div>
<div style="left:71px;top:646.2px;width:1818px;height:2px;background:#c4c4c4;"></div>
<span  style="left:39.50px;top:541.00px;font-size:18px;color:#1a1a1a;letter-spacing:0.251px;">Debug:</span>
<svg style="left:125px;top:537px;" width="24" height="24" viewBox="0 0 24 24"><rect x="5.5" y="1.5" width="15" height="12" fill="#f4f4f4" stroke="#8a8a8a" stroke-width="1.3"/><rect x="1.5" y="5.5" width="16" height="13" fill="#fff" stroke="#8a8a8a" stroke-width="1.5"/><rect x="4" y="9" width="11" height="7" fill="#7d9be6"/><circle cx="19" cy="20" r="3.6" fill="#1f9a5b"/></svg>
<span  style="left:153.00px;top:541.00px;font-size:18px;color:#1a1a1a;letter-spacing:0.176px;">StringTest4</span>
<svg style="left:254px;top:544px;" width="12" height="12" viewBox="0 0 12 12"><path d="M1 1l10 10M11 1L1 11" stroke="#9a9a9a" stroke-width="1.4"/></svg>
<div style="left:108px;top:564px;width:173px;height:3.5px;background:#8c8ca4;"></div>
<svg style="left:1823.2px;top:537.0px;" width="21.6" height="21.6" viewBox="0 0 21.6 21.6"><g transform="translate(10.8 10.8)"><rect x="-2.84" y="-9.8" width="5.68" height="19.6" rx="1.500" transform="rotate(0)" fill="#707070"/><rect x="-2.84" y="-9.8" width="5.68" height="19.6" rx="1.500" transform="rotate(60)" fill="#707070"/><rect x="-2.84" y="-9.8" width="5.68" height="19.6" rx="1.500" transform="rotate(120)" fill="#707070"/><circle r="7.06" fill="#707070"/><circle r="3.04" fill="#f1f1f1"/></g></svg>
<div style="left:1862px;top:546.8px;width:17.2px;height:2.5px;background:#626262;"></div>
<div style="left:70.4px;top:568px;width:1.6px;height:290px;background:#c4c4c4;"></div>
<svg style="left:41.3px;top:578.8px;" width="21.6" height="23.4" viewBox="0 0 24 26"><path d="M14 8.5A8 8 0 1 0 14 23" fill="none" stroke="#2f8c7c" stroke-width="3"/><path d="M12 1l9 7.5-9 7z" fill="#2f8c7c"/><rect x="13" y="15" width="7.5" height="7.5" fill="#5a5a5a"/></svg>
<div style="left:36.5px;top:612.5px;width:28px;height:1.5px;background:#c9c9c9;"></div>
<svg style="left:42px;top:625px;" width="20" height="22" viewBox="0 0 20 22"><rect x="1" y="1" width="5" height="20" fill="#2f8c7c"/><path d="M8.5 1v20l11-10z" fill="#2f8c7c"/></svg>
<svg style="left:43px;top:664px;" width="16" height="20" viewBox="0 0 16 20"><rect x="1.5" y="0" width="4.5" height="20" fill="#a9a9a9"/><rect x="10" y="0" width="4.5" height="20" fill="#a9a9a9"/></svg>
<div style="left:43px;top:706px;width:14.5px;height:14.5px;background:#b85f06;"></div>
<div style="left:36.5px;top:737px;width:28px;height:1.5px;background:#c9c9c9;"></div>
<svg style="left:40px;top:750px;" width="24" height="24" viewBox="0 0 24 24"><circle cx="15" cy="8" r="7" fill="#b85f06" stroke="#eee" stroke-width="1.2"/><circle cx="8.5" cy="15" r="7" fill="#b85f06" stroke="#eee" stroke-width="1.2"/></svg>
<svg style="left:40px;top:789px;" width="24" height="24" viewBox="0 0 24 24"><circle cx="12" cy="12" r="8" fill="#b85f06"/><path d="M2 20L22 3" stroke="#eee" stroke-width="4.5"/><path d="M2 20L22 3" stroke="#555" stroke-width="2"/></svg>
<div style="left:36.5px;top:823px;width:28px;height:1.5px;background:#c9c9c9;"></div>
<svg style="left:41px;top:839px;" width="20" height="10" viewBox="0 0 20 10"><path d="M0 4h4l1.700-3.500h8.600L16 4h4v7H0z" fill="#5a5a5a"/><circle cx="10" cy="9.500" r="3.600" fill="#eee"/></svg>
<span  style="left:88.40px;top:581.00px;font-size:16.6px;color:#1a1a1a;letter-spacing:0.156px;">Debugger</span>
<div style="left:71.5px;top:606.3px;width:107px;height:2.7px;background:#74749c;"></div>
<svg style="left:196px;top:577px;" width="22" height="24" viewBox="0 0 22 24"><rect x="0.500" y="4.800" width="16.500" height="13.800" fill="#4a4a4a"/><path d="M4.500 8l4.500 3.700-4.500 3.700" fill="none" stroke="#eee" stroke-width="1.900"/><circle cx="15.200" cy="18.300" r="4.600" fill="#8a9a10"/><path d="M15.200 15v5.500M12.800 18l2.400 2.500 2.400-2.500" stroke="#263800" stroke-width="1.200" fill="none"/></svg>
<span  style="left:220.00px;top:580.00px;font-size:16.4px;color:#1a1a1a;letter-spacing:-0.029px;">Console</span>
<svg style="left:299.5px;top:579px;" width="17" height="16" viewBox="0 0 17 16"><rect x="0" y="0.500" width="16.500" height="2" fill="#3a3a3a"/><rect x="0" y="5.400" width="16.500" height="4.400" fill="#3b5fdc"/><rect x="0" y="13.500" width="16.500" height="2" fill="#3a3a3a"/></svg>
<div style="left:331px;top:572px;width:1.3px;height:29px;background:#c9c9c9;"></div>
<svg style="left:343px;top:576px;" width="21" height="21" viewBox="0 0 21 21"><path d="M2.200 9.800l7-7.800 5.800 6.400" fill="none" stroke="#3b61dd" stroke-width="2.600"/><path d="M19.600 5v8h-8z" fill="#3b61dd"/><rect x="2.700" y="16.400" width="16.300" height="2" fill="#3a3a3a"/></svg>
<svg style="left:381.5px;top:576px;" width="19" height="21" viewBox="0 0 19 21"><path d="M9.500 0v9" stroke="#3a63d8" stroke-width="2.600"/><path d="M3.200 7l6.300 6.600L15.800 7z" fill="#3a63d8"/><rect x="1" y="16.400" width="17" height="2" fill="#3a3a3a"/></svg>
<svg style="left:418px;top:576px;" width="19" height="21" viewBox="0 0 19 21"><path d="M9.500 0v9" stroke="#c4680a" stroke-width="2.600"/><path d="M3.200 7l6.300 6.600L15.800 7z" fill="#c4680a"/><rect x="1" y="16.400" width="17" height="2" fill="#3a3a3a"/></svg>
<svg style="left:454.5px;top:576px;" width="19" height="21" viewBox="0 0 19 21"><path d="M9.500 13.400V5" stroke="#3a63d8" stroke-width="2.600"/><path d="M3.500 7.200l6-6.400 6 6.400z" fill="#3a63d8"/><rect x="1" y="16.400" width="17" height="2" fill="#3a3a3a"/></svg>
<svg style="left:490px;top:576px;" width="21" height="21" viewBox="0 0 21 21"><path d="M2 1.500l8 8M10 1.500l-8 8" stroke="#a8a8a8" stroke-width="2.200"/><path d="M11.500 7h6v10.400H7.400v-6" fill="none" stroke="#a8a8a8" stroke-width="2"/></svg>
<svg style="left:526px;top:576px;" width="24" height="24" viewBox="0 0 24 24"><path d="M3 2l7 7" stroke="#3b61dd" stroke-width="3"/><path d="M12 2.500v8.500H3.500z" fill="#3b61dd"/><path d="M13.500 9h7M13.500 20.500h7M17 9v11.500" stroke="#f0f0f0" stroke-width="3"/><path d="M14 9h2.200M17.800 9H20M14 20.400h2.200M17.800 20.400H20M17 9.500v10.500" stroke="#222" stroke-width="1.300"/></svg>
<div style="left:560px;top:572px;width:1.3px;height:29px;background:#c9c9c9;"></div>
<svg style="left:574.5px;top:577px;" width="18" height="18" viewBox="0 0 18 18"><rect x="0.500" y="0.500" width="16.500" height="17" fill="#484848"/><rect x="3.300" y="3" width="11" height="2.200" fill="#f4f4f4"/><g fill="#f4f4f4"><rect x="3.300" y="7.800" width="2.700" height="2.700"/><rect x="7.400" y="7.800" width="2.700" height="2.700"/><rect x="11.500" y="7.800" width="2.800" height="2.700"/><rect x="3.300" y="12.200" width="2.700" height="2.700"/><rect x="7.400" y="12.200" width="2.700" height="2.700"/><rect x="11.500" y="12.200" width="2.800" height="2.700"/></g></svg>
<svg style="left:610.5px;top:579px;" width="19" height="16" viewBox="0 0 19 16"><path d="M1 1.500h6M1 7.500h6M1 13.500h6M11 1.500h7M11 7.500h7M11 13.500h7" stroke="#a8a8a8" stroke-width="2"/><path d="M7 7.500c3 0 2-6 5-6" fill="none" stroke="#a8a8a8" stroke-width="1.600"/></svg>
<svg style="left:1860px;top:578px;" width="22" height="22" viewBox="0 0 22 22"><rect x="0" y="0" width="11" height="8" fill="#5a5a5a"/><rect x="13" y="0" width="6" height="8" fill="#5a5a5a"/><rect x="0" y="10" width="19" height="6" fill="#5a5a5a"/><path d="M14 18h8l-4 3.500z" fill="#333"/></svg>
<span  style="left:88.40px;top:621.00px;font-size:16px;color:#1a1a1a;letter-spacing:-0.325px;">Frames</span>
<div style="left:71.5px;top:645.8px;width:86px;height:2.4px;background:#7a7aa0;"></div>
<div style="left:433.8px;top:608px;width:1.8px;height:240px;background:#c4c4c4;"></div>
<span  style="left:452.30px;top:620.00px;font-size:16.3px;color:#1a1a1a;letter-spacing:0.032px;">Variables</span>
<div style="left:435.5px;top:645.8px;width:100px;height:2.4px;background:#7a7aa0;"></div>
<div style="left:1113px;top:608px;width:1.8px;height:240px;background:#c4c4c4;"></div>
<span  style="left:1131.50px;top:621.00px;font-size:16.6px;color:#1a1a1a;letter-spacing:0.39px;">Memory</span>
<div style="left:1115px;top:645.8px;width:95px;height:2.4px;background:#7a7aa0;"></div>
<div style="left:72px;top:648.1px;width:362.5px;height:42px;background:#efefef;"></div>
<div style="left:72px;top:690px;width:362.5px;height:1px;background:#d4d4d4;"></div>
<div style="left:72px;top:691px;width:362.5px;height:160px;background:#fff;"></div>
<div style="left:73.5px;top:651px;width:244px;height:37px;background:#d8d8d8;border:1.3px solid #a4a4a4;box-sizing:border-box;"></div>
<svg style="left:84.5px;top:661px;" width="20.5" height="16.2" viewBox="0 0 24 19"><path d="M2 10l6.500 7L22 2" fill="none" stroke="#a5861a" stroke-width="3.4"/></svg>
<span  style="left:110.00px;top:662.00px;font-size:18.3px;color:#1a1a1a;letter-spacing:0.052px;">"main"@1 in group ...</span>
<svg style="left:298px;top:665px;" width="13" height="9" viewBox="0 0 13 9"><path d="M1 1.500l5.500 5.500 5.500-5.500" fill="none" stroke="#4a4a4a" stroke-width="1.6"/></svg>
<svg style="left:332px;top:660px;" width="16" height="19" viewBox="0 0 16 19"><path d="M8 18V2M1.500 8.500L8 2l6.500 6.500" fill="none" stroke="#a2a2a2" stroke-width="2"/></svg>
<svg style="left:368.5px;top:660px;" width="16" height="19" viewBox="0 0 16 19"><path d="M8 1v16M1.500 10.500L8 17l6.500-6.500" fill="none" stroke="#a2a2a2" stroke-width="2"/></svg>
<svg style="left:404.5px;top:660.5px;" width="18" height="18" viewBox="0 0 18 18"><path d="M0 0h18l-6.500 8v9.500h-5V8z" fill="#5a5a5a"/></svg>
<div style="left:72px;top:693.5px;width:362.5px;height:29.5px;background:#3c56e0;"></div>
<span  style="left:83.20px;top:701.00px;font-size:17.9px;color:#fff;letter-spacing:0.07px;">main:26, StringTest4</span>
<span  style="left:254.50px;top:701.00px;font-size:17.9px;color:#fff;font-style:italic;letter-spacing:0.128px;">(com.atguigu.java1)</span>
<div style="left:436px;top:648.1px;width:678px;height:202px;background:#fff;"></div>
<div style="left:436px;top:648.1px;width:33.5px;height:202px;background:#f0f0f0;"></div>
<div style="left:469.5px;top:648.1px;width:1px;height:202px;background:#c4c4c4;"></div>
<svg style="left:443.5px;top:658.5px;" width="18" height="18" viewBox="0 0 18 18"><path d="M9 1v16M1 9h16" stroke="#3a3a3a" stroke-width="2.4"/></svg>
<div style="left:445px;top:705px;width:15px;height:2px;background:#a8a8a8;"></div>
<svg style="left:444px;top:738px;" width="17" height="12" viewBox="0 0 17 12"><path d="M0 11h17L8.500 1z" fill="#a8a8a8"/></svg>
<svg style="left:444px;top:776px;" width="17" height="12" viewBox="0 0 17 12"><path d="M0 1h17L8.500 11z" fill="#a8a8a8"/></svg>
<svg style="left:443px;top:808px;" width="20" height="22" viewBox="0 0 20 22"><path d="M1 1h13M1 1v14" stroke="#a8a8a8" stroke-width="1.800" fill="none"/><rect x="5" y="5" width="12.500" height="15" fill="none" stroke="#a8a8a8" stroke-width="1.800"/><path d="M8 10h7M8 13h7M8 16h7" stroke="#a8a8a8" stroke-width="1.500"/></svg>
<div style="left:437px;top:841px;width:32px;height:8px;background:#b4b4b4;"></div>
<div style="left:502.5px;top:656.5px;width:19px;height:19px;border-radius:50%;background:#aac84e;"></div>
<span  style="left:507.50px;top:658.00px;font-size:15.5px;color:#3e4a1a;">p</span>
<span  style="left:527.20px;top:657.00px;font-size:18px;color:#5c3205;letter-spacing:0.328px;-webkit-text-stroke:0.3px #5c3205;">args</span>
<span  style="left:570.00px;top:657.00px;font-size:18px;color:#1a1a1a;-webkit-text-stroke:0.4px #1a1a1a;">=</span>
<span  style="left:587.50px;top:658.00px;font-size:17.7px;color:#6e6e6e;letter-spacing:0.126px;">{String[0]@539}</span>
<div style="left:1115.3px;top:648.1px;width:774px;height:202px;background:#efefef;"></div>
<div style="left:1116px;top:650px;width:730.5px;height:36px;background:#fff;border:1.3px solid #b4b4b4;box-sizing:border-box;"></div>
<svg style="left:1126px;top:658px;" width="20" height="20" viewBox="0 0 20 20"><circle cx="7.500" cy="7.500" r="6" fill="none" stroke="#8a8a8a" stroke-width="1.500"/><path d="M12 12l5 5.500" stroke="#8a8a8a" stroke-width="2"/></svg>
<svg style="left:1857.2px;top:657.2px;" width="20.6" height="20.6" viewBox="0 0 20.6 20.6"><g transform="translate(10.3 10.3)"><rect x="-2.695" y="-9.3" width="5.39" height="18.6" rx="1.500" transform="rotate(0)" fill="#707070"/><rect x="-2.695" y="-9.3" width="5.39" height="18.6" rx="1.500" transform="rotate(60)" fill="#707070"/><rect x="-2.695" y="-9.3" width="5.39" height="18.6" rx="1.500" transform="rotate(120)" fill="#707070"/><circle r="6.7" fill="#707070"/><circle r="2.88" fill="#efefef"/></g></svg>
<svg style="left:1873px;top:672px;" width="8" height="5" viewBox="0 0 8 5"><path d="M0 0h8l-4 4.500z" fill="#333"/></svg>
<div style="left:1115.3px;top:687px;width:759.5px;height:164px;background:#fff;"></div>
<div style="left:1115.3px;top:724px;width:759.5px;height:1px;background:#dcdcdc;"></div>
<div style="left:1526.5px;top:689px;width:1px;height:33px;background:#dcdcdc;"></div>
<div style="left:1701px;top:689px;width:1px;height:33px;background:#dcdcdc;"></div>
<span  style="left:1126.00px;top:699.00px;font-size:17.2px;color:#1a1a1a;letter-spacing:-0.152px;">Class</span>
<span  style="left:1539.00px;top:699.00px;font-size:17.6px;color:#1a1a1a;">Count</span>
<span  style="left:1713.30px;top:698.00px;font-size:18px;color:#1a1a1a;letter-spacing:0.742px;">Diff</span>
<svg style="left:1752px;top:703.5px;" width="12" height="8" viewBox="0 0 12 8"><path d="M0 0h12l-6 7z" fill="#6e6e6e"/></svg>
<div style="left:1115.3px;top:756px;width:759.5px;height:29.5px;background:#4f5fea;"></div>
<span class="m" style="left:603.00px;top:728.00px;font-size:27.4px;color:#bfe94a;letter-spacing:-0.24px;">https://github.com/youthlql/JavaYouth</span>
<span  style="left:1128.00px;top:734.00px;font-size:17.8px;color:#111;letter-spacing:0.416px;">char[]</span>
<span style="left:1594.7px;width:100px;text-align:right;top:734px;font-size:17.6px;color:#111;">2449</span>
<span style="left:1767.4px;width:100px;text-align:right;top:734px;font-size:17.6px;color:#111;">+1</span>
<span  style="left:1128.00px;top:764.00px;font-size:17.8px;color:#fff;letter-spacing:0.12px;">java.lang.String</span>
<span style="left:1594.7px;width:100px;text-align:right;top:764px;font-size:17.6px;color:#fff;">2304</span>
<span style="left:1767.4px;width:100px;text-align:right;top:764px;font-size:17.6px;color:#fff;">+1</span>
<span  style="left:1128.00px;top:794.00px;font-size:17.8px;color:#111;letter-spacing:0.181px;">java.util.TreeMap$Entry</span>
<span style="left:1594.7px;width:100px;text-align:right;top:794px;font-size:17.6px;color:#111;">834</span>
<span style="left:1767.4px;width:100px;text-align:right;top:794px;font-size:17.6px;color:#111;">0</span>
<span  style="left:1128.00px;top:825.00px;font-size:17.8px;color:#111;letter-spacing:-0.129px;">java.lang.Class</span>
<span style="left:1594.7px;width:100px;text-align:right;top:825px;font-size:17.6px;color:#111;">608</span>
<span style="left:1767.4px;width:100px;text-align:right;top:825px;font-size:17.6px;color:#111;">0</span>
<svg style="left:1704.5px;top:766px;" width="24" height="12" viewBox="0 0 24 12"><circle cx="6" cy="6.500" r="4.300" fill="none" stroke="#9aa4f4" stroke-width="1.800"/><circle cx="17" cy="6.500" r="4.300" fill="none" stroke="#9aa4f4" stroke-width="1.800"/><path d="M1 3h21" stroke="#9aa4f4" stroke-width="1.600"/></svg>
<div style="left:1875.5px;top:725.5px;width:13.5px;height:28.5px;background:#c9c9c9;"></div>
</div></body></html>
